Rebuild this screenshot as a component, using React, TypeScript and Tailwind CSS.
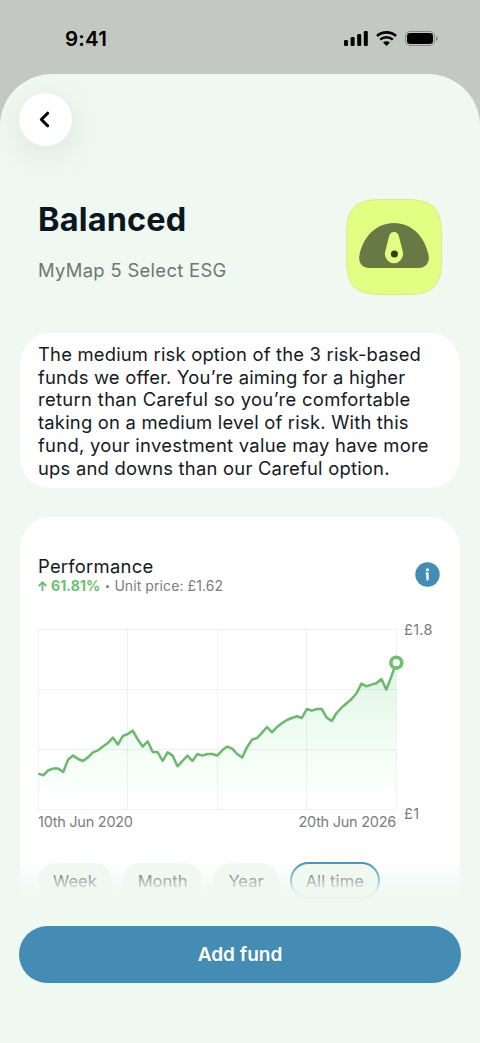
import React, { useState } from 'react';
import { ChevronLeft } from 'lucide-react';

const ranges = ['Week', 'Month', 'Year', 'All time'];

// Distance from the top of the plot, on a 540 unit scale
const prices = [
  433, 438, 423, 418, 418, 428, 391, 379, 389, 395, 384, 369, 363, 352, 341, 325, 346, 320, 314,
  304, 330, 352, 336, 368, 368, 395, 369, 379, 411, 395, 379, 395, 374, 379, 374, 374, 379, 363,
  352, 358, 374, 385, 353, 331, 326, 310, 293, 309, 293, 282, 272, 266, 261, 266, 239, 244, 239,
  239, 265, 275, 251, 235, 222, 209, 192, 163, 171, 166, 162, 149, 181, 142, 100
];

const WIDTH = 358;
const HEIGHT = 180;

const StatusBar = () => (
  <div className="flex h-[74px] items-start justify-between pl-[65px] pr-[42px] pt-[27px]">
    <span className="text-[20.5px] font-semibold leading-6 tracking-[0.2px] text-black">9:41</span>
    <div className="flex items-center gap-2 pt-1">
      <svg width="24" height="15" viewBox="0 0 24 15" fill="#000">
        <rect x="0" y="9" width="4" height="6" rx="1.2" />
        <rect x="6.6" y="6" width="4" height="9" rx="1.2" />
        <rect x="13.2" y="3" width="4" height="12" rx="1.2" />
        <rect x="19.8" y="0" width="4" height="15" rx="1.2" />
      </svg>
      <svg width="21" height="15" viewBox="0 0 21 15" fill="none" stroke="#000">
        <path d="M1 5.1C6.3.2 14.7.2 20 5.1" strokeWidth="2.7" />
        <path d="M4.2 8.6c3.6-3.3 9-3.3 12.6 0" strokeWidth="2.5" />
        <path d="M10.5 15 7 11.5c2-1.8 5-1.8 7 0z" fill="#000" stroke="none" />
      </svg>
      <svg width="33" height="15" viewBox="0 0 33 15">
        <rect x="0.5" y="0.5" width="29" height="14" rx="4.5" fill="none" stroke="#000" strokeOpacity="0.3" />
        <rect x="2" y="2" width="26" height="11" rx="3.2" fill="#000" />
        <path d="M31.2 5.2v4.6c1-.4 1.5-1.3 1.5-2.3s-.5-1.9-1.5-2.3z" fill="#000" fillOpacity="0.4" />
      </svg>
    </div>
  </div>
);

const FundIcon = () => (
  <svg width="96" height="96" viewBox="0 0 96 96">
    <path
      d="M.5 36C.5 9 9 .5 36 .5h24C87 .5 95.5 9 95.5 36v24C95.5 87 87 95.5 60 95.5H36C9 95.5.5 87 .5 60z"
      fill="#e0ff83"
      stroke="#d3ee8e"
    />
    <path
      d="M48 24c18 0 31 14 34.6 32.5C84 63.5 79.5 69 73 69H23c-6.5 0-11-5.5-9.6-12.5C17 38 30 24 48 24z"
      fill="#677a45"
    />
    <path
      d="M48 33c2.6 0 4.2 1.6 4.9 4.2l3.7 14.5c.3 1.2.5 2.4.5 3.4a9.1 9.1 0 0 1-18.2 0c0-1 .2-2.2.5-3.4l3.7-14.5c.7-2.6 2.3-4.2 4.9-4.2z"
      fill="#e0ff83"
    />
    <circle cx="48.4" cy="55" r="3.5" fill="#2f4013" />
  </svg>
);

const PriceChart = () => {
  const points = prices.map(
    (p, i) => `${((i * WIDTH) / (prices.length - 1) + 0.3).toFixed(1)},${(p / 3 + 0.3).toFixed(1)}`
  );
  const line = `M${points.join('L')}`;

  return (
    <svg width="358" height="180" viewBox="0 0 358 180" className="block overflow-visible">
      <defs>
        <linearGradient id="area" x1="0" y1="0" x2="0" y2="1">
          <stop offset="0" stopColor="#6bd37a" stopOpacity="0.22" />
          <stop offset="0.8" stopColor="#dcffe8" stopOpacity="0.18" />
          <stop offset="1" stopColor="#ffffff" stopOpacity="0" />
        </linearGradient>
      </defs>
      <path d={`${line}L${WIDTH},${HEIGHT}L0,${HEIGHT}Z`} fill="url(#area)" />
      <path
        d="M0 .5H358M0 60.5H358M0 120.5H358M0 180.5H358M.5 0V180M89.5 0V180M179.5 0V180M268.5 0V180M358.5 0V180"
        stroke="#000"
        strokeOpacity="0.055"
      />
      <path d={line} fill="none" stroke="#6bb86e" strokeWidth="2.5" strokeLinejoin="round" />
      <circle cx="358.3" cy="33.7" r="5.4" fill="#fff" stroke="#6fbf72" strokeWidth="3.6" />
    </svg>
  );
};

const App = () => {
  const [range, setRange] = useState('All time');

  return (
    <div className="relative h-[1043px] w-[480px] overflow-hidden bg-[#c4c8c3] font-['Inter',sans-serif]">
      <StatusBar />

      <main className="h-[969px] rounded-t-[52px] bg-[#f0f8f2] px-5 pt-[19px]">
        <button className="-ml-px flex h-[53px] w-[53px] items-center justify-center rounded-full bg-white pb-px pr-0.5 shadow-[0_8px_30px_6px_rgba(0,0,0,0.06)]">
          <ChevronLeft className="h-[25px] w-[25px] text-black" strokeWidth={3} />
        </button>

        {/* Fund header */}
        <div className="mt-[53px] flex items-start justify-between pl-[18px] pr-[18px]">
          <div className="whitespace-nowrap pt-0.5">
            <h1 className="text-[32.5px] font-bold leading-[38px] tracking-[0.15px] text-[#0b1620]">Balanced</h1>
            <p className="mt-[19px] text-[18.4px] leading-6 tracking-[0.32px] text-[#707672]">MyMap 5 Select ESG</p>
          </div>
          <FundIcon />
        </div>

        <p className="mt-[38px] h-[155px] whitespace-nowrap rounded-[30px] bg-white pl-[18px] pt-[9.8px] text-[18.4px] leading-[22.8px] text-[#141a1e]">
          <span className="block tracking-[0.2px]">The medium risk option of the 3 risk-based</span>
          <span className="block tracking-[0.21px]">funds we offer. You’re aiming for a higher</span>
          <span className="block tracking-[0.33px]">return than Careful so you’re comfortable</span>
          <span className="block tracking-[0.22px]">taking on a medium level of risk. With this</span>
          <span className="block tracking-[0.28px]">fund, your investment value may have more</span>
          <span className="block tracking-[0.23px]">ups and downs than our Careful option.</span>
        </p>

        {/* Performance */}
        <section className="mt-[29px] h-[440px] rounded-[30px] bg-white pl-[18px] pr-5 pt-[38px]">
          <div className="flex items-center justify-between">
            <div className="whitespace-nowrap">
              <h2 className="text-[18.4px] leading-[22px] tracking-[0.25px] text-[#141a1e]">Performance</h2>
              <p className="flex items-center pb-px text-[14px] leading-[18px] text-[#7a7d7b]">
                <svg width="9" height="10" viewBox="0 0 9 10" fill="none" stroke="#6bbf6e" strokeWidth="1.8">
                  <path d="M4.5 10V1.5M.7 5l3.8-3.8L8.3 5" />
                </svg>
                <span className="ml-1 font-bold tracking-[0.1px] text-[#6bbf6e]">61.81%</span>
                <span className="mx-[5.5px] h-[3px] w-[3px] rounded-full bg-[#7a7d7b]" />
                <span className="tracking-[0.08px]">Unit price: £1.62</span>
              </p>
            </div>
            <button className="-mt-[3px] rounded-full">
              <svg width="25" height="25" viewBox="0 0 25 25">
                <circle cx="12.5" cy="12.5" r="12.2" fill="#448cb3" />
                <circle cx="12.5" cy="7.7" r="1.5" fill="#fff" />
                <path d="M11.6 11.5h.9v6" fill="none" stroke="#fff" strokeWidth="2.3" strokeLinecap="round" strokeLinejoin="round" />
              </svg>
            </button>
          </div>

          <div className="mt-[33px] flex">
            <div className="w-[358px]">
              <PriceChart />
              <div className="mt-1 flex justify-between whitespace-nowrap text-[14.5px] leading-[18px] tracking-[-0.26px] text-[#7a7d7b]">
                <span>10th Jun 2020</span>
                <span>20th Jun 2026</span>
              </div>
            </div>
            <div className="-mt-2 ml-2 flex h-[202px] flex-col justify-between text-[14.5px] leading-[18px] tracking-[0.3px] text-[#7a7d7b]">
              <span>£1.8</span>
              <span>£1</span>
            </div>
          </div>

          <div className="mt-[31px] flex items-center gap-[11px]">
            {ranges.map((r) => (
              <button
                key={r}
                onClick={() => setRange(r)}
                className={`whitespace-nowrap rounded-full bg-[#f0f8f2] pt-px text-[16.5px] text-[#4a504d] ${
                  r === range
                    ? 'h-[37px] border-[2.5px] border-[#448cb3] px-[14px] tracking-[0.1px]'
                    : 'h-9 px-[15px]'
                }`}
              >
                {r}
              </button>
            ))}
          </div>
        </section>
      </main>

      {/* Sticky footer */}
      <div className="absolute inset-x-0 bottom-0">
        <div className="h-[42px] bg-[linear-gradient(to_bottom,rgba(240,248,242,0)_0%,rgba(240,248,242,0.35)_35%,rgba(240,248,242,0.88)_70%,rgba(240,248,242,1)_100%)]" />
        <div className="h-[141px] bg-[#f0f8f2] px-[19px] pt-6">
          <button className="h-[57px] w-full rounded-full bg-[#448cb3] pt-0.5 text-[19px] font-semibold text-white">
            Add fund
          </button>
        </div>
      </div>
    </div>
  );
};

export default App;
